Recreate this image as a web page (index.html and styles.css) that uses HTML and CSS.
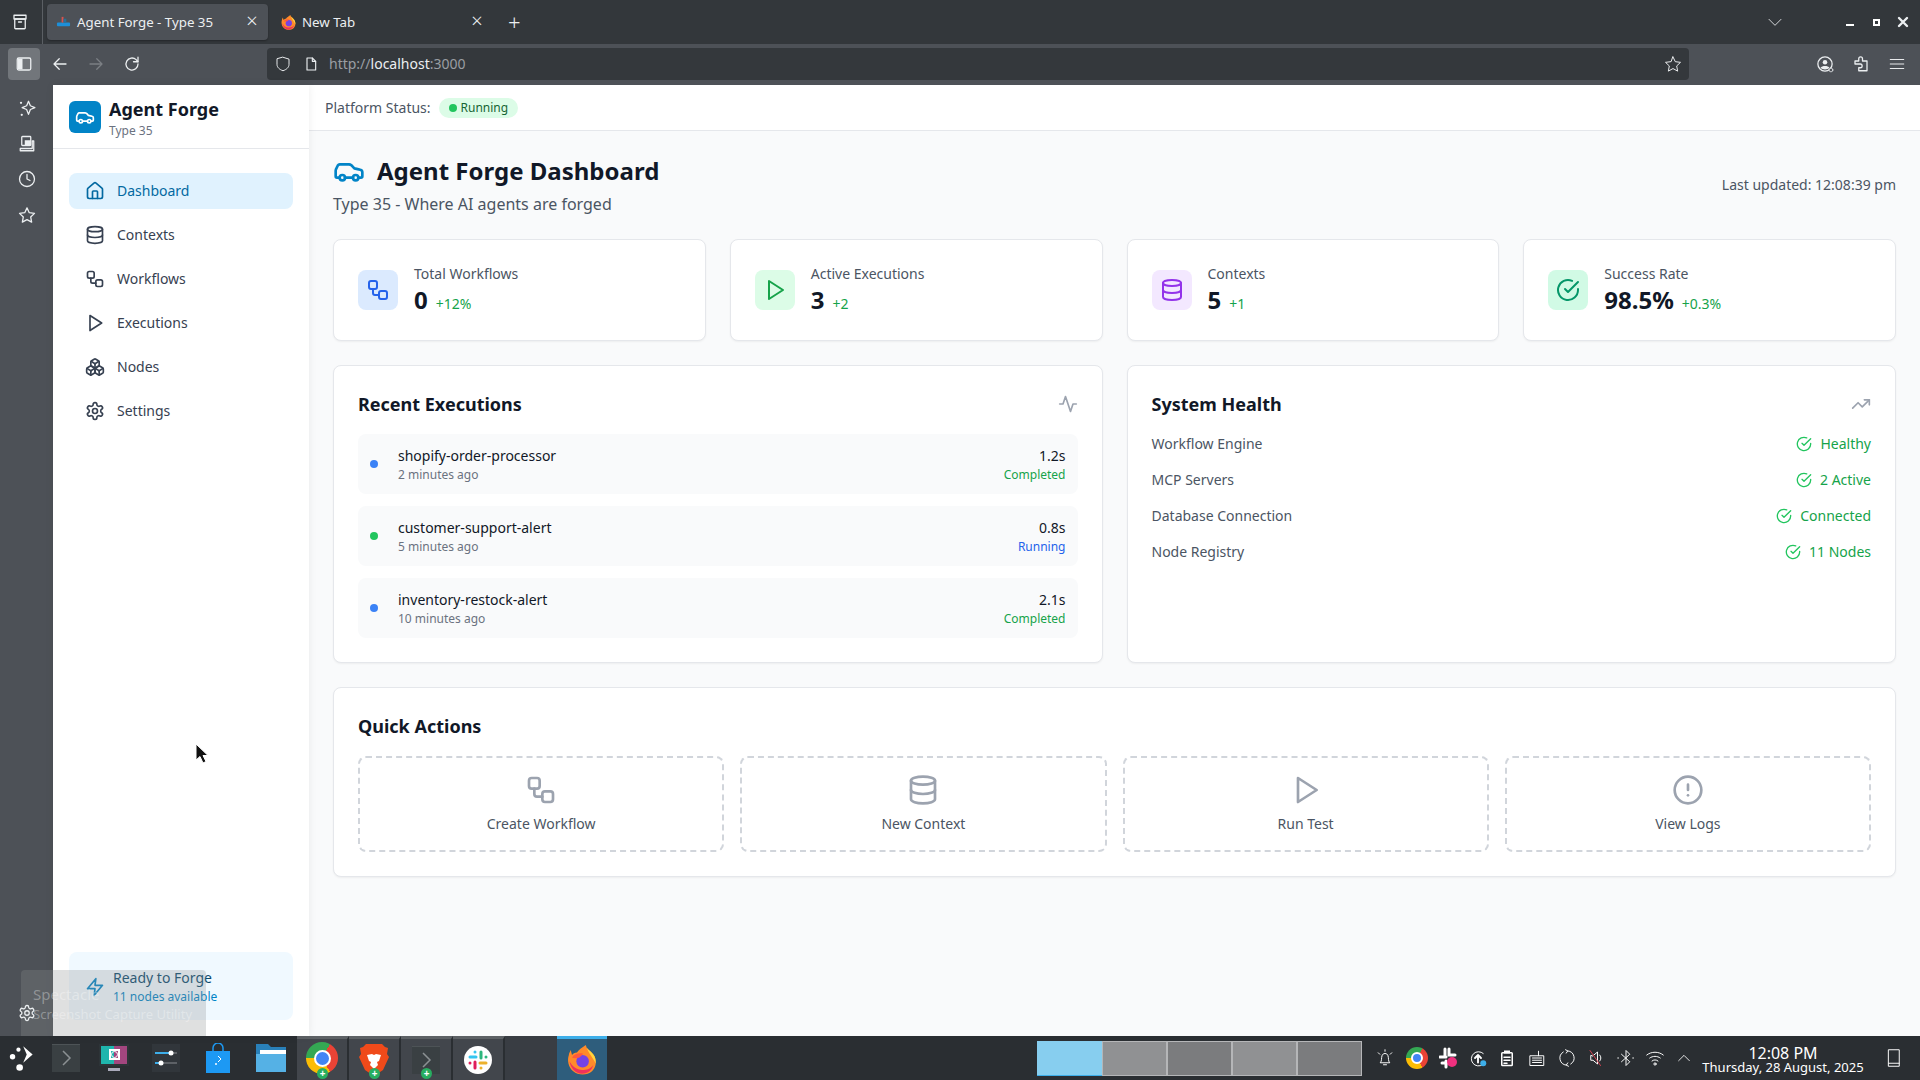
FILE: index.html
```html
<!DOCTYPE html>
<html lang="en">
<head>
<meta charset="utf-8">
<title>Agent Forge - Type 35</title>
<link rel="stylesheet" href="styles.css">
</head>
<body>
<svg class="sprite" width="0" height="0" aria-hidden="true">
  <symbol id="i-car" viewBox="0 0 24 24"><path d="M19 17h2c.6 0 1-.4 1-1v-3c0-.9-.7-1.7-1.5-1.9C18.7 10.6 16 10 16 10s-1.3-1.4-2.2-2.3c-.5-.4-1.1-.7-1.8-.7H5c-.6 0-1.1.4-1.4.9l-1.4 2.9A3.7 3.7 0 0 0 2 12v4c0 .6.4 1 1 1h2"/><circle cx="7" cy="17" r="2"/><path d="M9 17h6"/><circle cx="17" cy="17" r="2"/></symbol>
  <symbol id="i-home" viewBox="0 0 24 24"><path d="M15 21v-8a1 1 0 0 0-1-1h-4a1 1 0 0 0-1 1v8"/><path d="M3 10a2 2 0 0 1 .709-1.528l7-5.999a2 2 0 0 1 2.582 0l7 5.999A2 2 0 0 1 21 10v9a2 2 0 0 1-2 2H5a2 2 0 0 1-2-2z"/></symbol>
  <symbol id="i-db" viewBox="0 0 24 24"><ellipse cx="12" cy="5" rx="9" ry="3"/><path d="M3 5V19A9 3 0 0 0 21 19V5"/><path d="M3 12A9 3 0 0 0 21 12"/></symbol>
  <symbol id="i-flow" viewBox="0 0 24 24"><rect x="3" y="3" width="8" height="8" rx="2"/><path d="M7 11v4a2 2 0 0 0 2 2h4"/><rect x="13" y="13" width="8" height="8" rx="2"/></symbol>
  <symbol id="i-play" viewBox="0 0 24 24"><polygon points="6 3 20 12 6 21 6 3"/></symbol>
  <symbol id="i-boxes" viewBox="0 0 24 24"><path d="M2.97 12.92A2 2 0 0 0 2 14.63v3.24a2 2 0 0 0 .97 1.71l3 1.8a2 2 0 0 0 2.06 0L12 19v-5.5l-5-3-4.03 2.42Z"/><path d="m7 16.5-4.74-2.85"/><path d="m7 16.5 5-3"/><path d="M7 16.5v5.17"/><path d="M12 13.5V19l3.97 2.38a2 2 0 0 0 2.06 0l3-1.8a2 2 0 0 0 .97-1.71v-3.24a2 2 0 0 0-.97-1.71L17 10.5l-5 3Z"/><path d="m17 16.5-5-3"/><path d="m17 16.5 4.74-2.85"/><path d="M17 16.5v5.17"/><path d="M7.97 4.42A2 2 0 0 0 7 6.13v4.37l5 3 5-3V6.13a2 2 0 0 0-.97-1.71l-3-1.8a2 2 0 0 0-2.06 0l-3 1.8Z"/><path d="M12 8 7.26 5.15"/><path d="m12 8 4.74-2.85"/><path d="M12 13.5V8"/></symbol>
  <symbol id="i-gear" viewBox="0 0 24 24"><path d="M12.22 2h-.44a2 2 0 0 0-2 2v.18a2 2 0 0 1-1 1.73l-.43.25a2 2 0 0 1-2 0l-.15-.08a2 2 0 0 0-2.73.73l-.22.38a2 2 0 0 0 .73 2.73l.15.1a2 2 0 0 1 1 1.72v.51a2 2 0 0 1-1 1.74l-.15.09a2 2 0 0 0-.73 2.73l.22.38a2 2 0 0 0 2.73.73l.15-.08a2 2 0 0 1 2 0l.43.25a2 2 0 0 1 1 1.73V20a2 2 0 0 0 2 2h.44a2 2 0 0 0 2-2v-.18a2 2 0 0 1 1-1.73l.43-.25a2 2 0 0 1 2 0l.15.08a2 2 0 0 0 2.73-.73l.22-.39a2 2 0 0 0-.73-2.73l-.15-.08a2 2 0 0 1-1-1.74v-.5a2 2 0 0 1 1-1.74l.15-.09a2 2 0 0 0 .73-2.73l-.22-.38a2 2 0 0 0-2.73-.73l-.15.08a2 2 0 0 1-2 0l-.43-.25a2 2 0 0 1-1-1.73V4a2 2 0 0 0-2-2z"/><circle cx="12" cy="12" r="3"/></symbol>
  <symbol id="i-check" viewBox="0 0 24 24"><path d="M22 11.08V12a10 10 0 1 1-5.93-9.14"/><polyline points="22 4 12 14.01 9 11.01"/></symbol>
  <symbol id="i-activity" viewBox="0 0 24 24"><polyline points="22 12 18 12 15 21 9 3 6 12 2 12"/></symbol>
  <symbol id="i-trend" viewBox="0 0 24 24"><polyline points="22 7 13.5 15.5 8.5 10.5 2 17"/><polyline points="16 7 22 7 22 13"/></symbol>
  <symbol id="i-alert" viewBox="0 0 24 24"><circle cx="12" cy="12" r="10"/><line x1="12" y1="8" x2="12" y2="12"/><line x1="12" y1="16" x2="12.01" y2="16"/></symbol>
  <symbol id="i-zap" viewBox="0 0 24 24"><polygon points="13 2 3 14 12 14 11 22 21 10 12 10 13 2"/></symbol>
  <symbol id="i-star" viewBox="0 0 24 24"><polygon points="12 2.5 15 8.9 22 9.8 16.9 14.6 18.2 21.5 12 18.1 5.8 21.5 7.1 14.6 2 9.8 9 8.9"/></symbol>
  <symbol id="i-clock" viewBox="0 0 24 24"><circle cx="12" cy="12" r="10"/><polyline points="12 6 12 12 16 14"/></symbol>
  <symbol id="i-firefox" viewBox="0 0 24 24"><path style="fill:#ff8a2a;stroke:none" d="M15 0c0 3 5 5 7 9 2 5 1 9-2 12-4 3.500-11 3.500-15 0C1 18 0 12 1.500 8c0-1 .5-2 1.500-4l1 4c1-1 2-2 4-2 1-2 4-4 7-6z"/><path style="fill:#ffd43d;stroke:none" d="M15 0c0 3 5 5 7 9 1 2 1 4 1 6-2-5-6-8-8-15z"/><path style="fill:#f0315c;stroke:none" d="M2 13c1 6 5 10 10 10 5 0 8-3 9-7-2 3-5 4-9 4-4 0-8-3-10-7z"/><circle style="fill:#7542e5;stroke:none" cx="12.500" cy="13" r="5"/><path style="fill:#ff5a3c;stroke:none" d="M4 10c2-3 6-4 9-3l-3 3c-2 .5-4 1-6 0z"/></symbol>
  <symbol id="i-terminal" viewBox="0 0 28 28"><rect style="fill:#3a4043;stroke:none" x="0" y="0" width="28" height="28"/><rect style="fill:#4d5356;stroke:none" x="0" y="0" width="28" height="1"/><polyline style="stroke:#8b9093;stroke-width:1.500;fill:none" points="11 7 18 14 11 21"/></symbol>
</svg>

<header class="tabbar">
  <div class="tab-group"><svg class="ic ic18 light" viewBox="0 0 24 24"><path d="M5 8h14v12a1 1 0 0 1-1 1H6a1 1 0 0 1-1-1z"/><path d="M4 3h16v5H4z"/><path d="M10 12h4"/></svg></div>
  <div class="tab tab-active">
    <svg class="fav" viewBox="0 0 16 16"><rect x="1" y="8" width="14" height="4" rx="1" fill="#1d8fd8"/><rect x="6" y="2" width="2" height="6" fill="#d9534f"/><rect x="8" y="4" width="3" height="4" fill="#2a6f97"/></svg>
    <span class="tab-title">Agent Forge - Type 35</span>
    <span class="tab-x">×</span>
  </div>
  <div class="tab">
    <svg class="fav"><use href="#i-firefox"/></svg>
    <span class="tab-title">New Tab</span>
    <span class="tab-x">×</span>
  </div>
  <span class="tab-plus">+</span>
  <div class="win">
    <svg class="ic ic16 light thin chev" viewBox="0 0 24 24"><polyline points="3 8 12 17 21 8"/></svg>
    <span class="win-min"></span><span class="win-max"></span>
    <svg class="ic ic12 light heavy" viewBox="0 0 12 12"><path d="M2 2l8 8M10 2l-8 8"/></svg>
  </div>
</header>

<nav class="toolbar">
  <button class="tb-side"><svg class="ic ic18 light" viewBox="0 0 24 24"><rect x="3" y="4" width="18" height="16" rx="2"/><rect class="solid" x="4" y="5" width="6" height="14"/></svg></button>
  <svg class="ic ic18 light tb-b" viewBox="0 0 24 24"><path d="M20 12H5M11 5l-7 7 7 7"/></svg>
  <svg class="ic ic18 dim tb-f" viewBox="0 0 24 24"><path d="M4 12h15M13 5l7 7-7 7"/></svg>
  <svg class="ic ic18 light tb-r" viewBox="0 0 24 24"><path d="M20 12a8 8 0 1 1-2.500-5.800L20 9"/><path d="M20 3v6h-6"/></svg>
  <div class="urlbar">
    <svg class="ic ic18 light thin" viewBox="0 0 24 24"><path d="M12 3l8 2.500v7c0 4-3.500 7-8 8.500-4.500-1.500-8-4.500-8-8.500v-7z"/></svg>
    <svg class="ic ic16 light url-doc" viewBox="0 0 24 24"><path d="M6 3h8l5 5v13H6z"/><path d="M14 3v5h5"/></svg>
    <span class="url"><span class="url-dim">http://</span>localhost<span class="url-dim">:3000</span></span>
    <svg class="ic ic18 light thin url-star"><use href="#i-star"/></svg>
  </div>
  <div class="tb-right">
    <svg class="ic ic18 light" viewBox="0 0 24 24"><circle cx="12" cy="12" r="9.500"/><circle cx="12" cy="9.500" r="3" class="solid"/><path class="solid" d="M6 17c2-3 10-3 12 0-3 3-9 3-12 0z"/><circle cx="20" cy="20" r="2.500" class="dark"/></svg>
    <svg class="ic ic18 light" viewBox="0 0 24 24"><path d="M4 8h5V5a2.500 2.500 0 0 1 5 0v3h6v13H9v-4h2a2.500 2.500 0 0 0 0-5H4z"/></svg>
    <svg class="ic ic18 light thin" viewBox="0 0 24 24"><path d="M3 6h18M3 12h18M3 18h18"/></svg>
  </div>
</nav>

<div class="window">
  <aside class="browser-rail">
    <div class="rail-top">
      <svg class="ic ic18 light" viewBox="0 0 24 24"><path d="M14 3l2.500 6 6 2.500-6 2.500-2.500 6.500-2.500-6.500-6-2.500 6-2.500z"/><circle class="solid" cx="4" cy="5" r="1.500"/><circle class="solid" cx="5" cy="21" r="1.500"/></svg>
      <svg class="ic ic18 light" viewBox="0 0 24 24"><rect x="5" y="2" width="12" height="12" rx="1"/><path class="solid" d="M9 7h8v7H9z"/><path d="M19 8h2v13H3v-3h16z"/></svg>
      <svg class="ic ic18 light"><use href="#i-clock"/></svg>
      <svg class="ic ic18 light"><use href="#i-star"/></svg>
    </div>
  </aside>

  <aside class="sidebar">
    <div class="brand">
      <div class="brand-logo"><svg class="ic ic20 white"><use href="#i-car"/></svg></div>
      <div>
        <div class="brand-name">Agent Forge</div>
        <div class="brand-sub">Type 35</div>
      </div>
    </div>
    <ul class="nav">
      <li class="nav-item nav-active"><svg class="ic ic20"><use href="#i-home"/></svg>Dashboard</li>
      <li class="nav-item"><svg class="ic ic20"><use href="#i-db"/></svg>Contexts</li>
      <li class="nav-item"><svg class="ic ic20"><use href="#i-flow"/></svg>Workflows</li>
      <li class="nav-item"><svg class="ic ic20"><use href="#i-play"/></svg>Executions</li>
      <li class="nav-item"><svg class="ic ic20"><use href="#i-boxes"/></svg>Nodes</li>
      <li class="nav-item"><svg class="ic ic20"><use href="#i-gear"/></svg>Settings</li>
    </ul>
    <div class="ready">
      <svg class="ic ic20 sky"><use href="#i-zap"/></svg>
      <div>
        <div class="ready-title">Ready to Forge</div>
        <div class="ready-sub">11 nodes available</div>
      </div>
    </div>
  </aside>

  <div class="content">
    <div class="status-bar">
      <span class="status-label">Platform Status:</span>
      <span class="pill"><i class="pill-dot"></i>Running</span>
    </div>
    <main class="main">
      <div class="page-head">
        <div>
          <h1 class="page-title"><svg class="ic ic32 sky"><use href="#i-car"/></svg>Agent Forge Dashboard</h1>
          <p class="page-sub">Type 35 - Where AI agents are forged</p>
        </div>
        <div class="updated">Last updated: 12:08:39 pm</div>
      </div>

      <section class="stats">
        <div class="card stat">
          <div class="stat-ic bg-blue"><svg class="ic ic24"><use href="#i-flow"/></svg></div>
          <div><div class="stat-label">Total Workflows</div><div class="stat-val">0<span class="stat-delta">+12%</span></div></div>
        </div>
        <div class="card stat">
          <div class="stat-ic bg-green"><svg class="ic ic24"><use href="#i-play"/></svg></div>
          <div><div class="stat-label">Active Executions</div><div class="stat-val">3<span class="stat-delta">+2</span></div></div>
        </div>
        <div class="card stat">
          <div class="stat-ic bg-purple"><svg class="ic ic24"><use href="#i-db"/></svg></div>
          <div><div class="stat-label">Contexts</div><div class="stat-val">5<span class="stat-delta">+1</span></div></div>
        </div>
        <div class="card stat">
          <div class="stat-ic bg-emerald"><svg class="ic ic24"><use href="#i-check"/></svg></div>
          <div><div class="stat-label">Success Rate</div><div class="stat-val">98.5%<span class="stat-delta">+0.3%</span></div></div>
        </div>
      </section>

      <section class="panels">
        <div class="card panel">
          <div class="panel-head"><h2 class="panel-title">Recent Executions</h2><svg class="ic ic20 gray"><use href="#i-activity"/></svg></div>
          <div class="exec-list">
            <div class="exec"><i class="dot dot-blue"></i><div class="exec-main"><div class="exec-name">shopify-order-processor</div><div class="exec-time">2 minutes ago</div></div><div class="exec-right"><div class="exec-name">1.2s</div><div class="exec-done">Completed</div></div></div>
            <div class="exec"><i class="dot dot-green"></i><div class="exec-main"><div class="exec-name">customer-support-alert</div><div class="exec-time">5 minutes ago</div></div><div class="exec-right"><div class="exec-name">0.8s</div><div class="exec-run">Running</div></div></div>
            <div class="exec"><i class="dot dot-blue"></i><div class="exec-main"><div class="exec-name">inventory-restock-alert</div><div class="exec-time">10 minutes ago</div></div><div class="exec-right"><div class="exec-name">2.1s</div><div class="exec-done">Completed</div></div></div>
          </div>
        </div>
        <div class="card panel">
          <div class="panel-head"><h2 class="panel-title">System Health</h2><svg class="ic ic20 gray"><use href="#i-trend"/></svg></div>
          <div class="health">
            <div class="health-row"><span>Workflow Engine</span><span class="health-ok"><svg class="ic ic16"><use href="#i-check"/></svg>Healthy</span></div>
            <div class="health-row"><span>MCP Servers</span><span class="health-ok"><svg class="ic ic16"><use href="#i-check"/></svg>2 Active</span></div>
            <div class="health-row"><span>Database Connection</span><span class="health-ok"><svg class="ic ic16"><use href="#i-check"/></svg>Connected</span></div>
            <div class="health-row"><span>Node Registry</span><span class="health-ok"><svg class="ic ic16"><use href="#i-check"/></svg>11 Nodes</span></div>
          </div>
        </div>
      </section>

      <section class="card panel">
        <h2 class="panel-title quick-title">Quick Actions</h2>
        <div class="quick">
          <div class="quick-btn"><svg class="ic ic32"><use href="#i-flow"/></svg>Create Workflow</div>
          <div class="quick-btn"><svg class="ic ic32"><use href="#i-db"/></svg>New Context</div>
          <div class="quick-btn"><svg class="ic ic32"><use href="#i-play"/></svg>Run Test</div>
          <div class="quick-btn"><svg class="ic ic32"><use href="#i-alert"/></svg>View Logs</div>
        </div>
      </section>
    </main>
  </div>
</div>

<footer class="taskbar">
  <div class="launcher"><svg width="26" height="26" viewBox="2 2 22 22"><path d="M14 3l8 7-8 7 3-7z" fill="#fff"/><circle cx="5" cy="12" r="2.300" fill="#fff"/><circle cx="10" cy="6" r="1.800" fill="#fff"/><circle cx="11" cy="21" r="2.800" fill="#fff"/></svg></div>
  <div class="task-ic ti44"><svg width="28" height="28"><use href="#i-terminal"/></svg></div>
  <div class="task-ic"><svg width="32" height="32" viewBox="0 0 32 32"><rect x="1" y="2" width="30" height="22" fill="#2d3438"/><rect x="3" y="4" width="13" height="18" fill="#1fb5ad"/><rect x="16" y="4" width="13" height="18" fill="#a3467f"/><rect x="12" y="8" width="9" height="9" fill="none" stroke="#fff" stroke-width="2"/><circle cx="16.500" cy="12.500" r="3" fill="none" stroke="#fff"/><rect x="10" y="26" width="12" height="3" fill="#aab"/></svg></div>
  <div class="task-ic"><svg width="28" height="28" viewBox="0 0 28 28"><rect width="28" height="28" fill="#31363b"/><path d="M3 9h22M3 19h22" stroke="#5d6166" stroke-width="2"/><path d="M3 9h16M3 19h6" stroke="#3daee9" stroke-width="2"/><circle cx="19" cy="9" r="2.500" fill="#fff"/><circle cx="9" cy="19" r="2.500" fill="#fff"/></svg></div>
  <div class="task-ic"><svg width="24" height="30" viewBox="0 0 24 30"><path d="M0 8h24v22H0z" fill="#1d99f3"/><path d="M7 9V5a5 5 0 0 1 10 0v4" fill="none" stroke="#1d99f3" stroke-width="1.500"/><circle cx="10" cy="21" r="1" fill="#fff"/><path d="M12 13l3 3-3 3" fill="none" stroke="#fff"/></svg></div>
  <div class="task-ic ti53"><svg width="30" height="28" viewBox="0 0 30 28"><path d="M0 0h12l3 3h15v25H0z" fill="#2980b9"/><rect x="4" y="6" width="26" height="5" fill="#fff"/><rect y="10" width="30" height="18" fill="#55b1e5"/></svg></div>
  <div class="task-run">
    <div class="chrome"><i></i></div><span class="badge">+</span>
  </div>
  <div class="task-run">
    <svg width="30" height="34" viewBox="0 0 30 34"><path d="M7 1h16l3 3 3 1-1 6 2 3-6 13-9 6-9-6L0 14l2-3-1-6 3-1z" fill="#f04a1a"/><path d="M8 12l5-1 2 1 2-1 5 1-2 6-2 1 1 3-4 4-4-4 1-3-2-1z" fill="#fff"/></svg><span class="badge">+</span>
  </div>
  <div class="task-run">
    <svg width="28" height="28"><use href="#i-terminal"/></svg><span class="badge">+</span>
  </div>
  <div class="task-run">
    <svg width="28" height="28" viewBox="0 0 28 28"><circle cx="14" cy="14" r="14" fill="#fff"/><g fill="none" stroke-width="3" stroke-linecap="round"><path d="M11 6v.1M6 11h6" stroke="#36c5f0"/><path d="M22 11v.1M17 6v6" stroke="#2eb67d"/><path d="M17 22v.1M16 17h6" stroke="#ecb22e"/><path d="M6 17v.1M11 16v6" stroke="#e01e5a"/></g></svg>
  </div>
  <div class="task-blank"></div>
  <div class="task-fox"><svg width="30" height="32"><use href="#i-firefox"/></svg></div>

  <div class="pager">
    <div class="desk desk-on"></div><div class="desk desk-a"></div><div class="desk desk-b"></div><div class="desk desk-a"></div><div class="desk desk-b"></div>
  </div>
  <div class="tray">
    <svg class="ic ic18 white thin" viewBox="0 0 24 24"><path d="M6 18c2-2 1-6 2-9 1-4 7-4 8 0 1 3 0 7 2 9z"/><path d="M10 21h4M12 1v2M3 5l2 2M21 5l-2 2"/></svg>
    <div class="chrome small"><i></i></div>
    <svg width="18" height="22" viewBox="0 0 18 22"><path d="M6 2v7M1 10h6M10 2v6h6" stroke="#fff" stroke-width="3" stroke-linecap="round" fill="none"/><path d="M3 16h5M7 14v6" stroke="#fff" stroke-width="3" stroke-linecap="round"/><circle cx="13" cy="15" r="5" fill="#f0307f"/></svg>
    <svg class="ic ic18 white thin" viewBox="0 0 24 24"><path d="M19 6a9.500 9.500 0 1 0-1 15"/><path d="M12 18V8M8 12l4-4 4 4" stroke-width="2.500"/><circle class="blue-fill" cx="19" cy="19" r="4"/></svg>
    <svg class="ic ic18 white" viewBox="0 0 24 24"><rect x="5" y="5" width="14" height="17" rx="1"/><rect class="solid" x="8" y="2" width="8" height="4"/><path d="M8 11h8M8 15h8M8 19h4"/></svg>
    <svg class="ic ic18 white thin" viewBox="0 0 24 24"><rect x="3" y="9" width="18" height="13"/><path d="M6 12h12M6 15h12M6 18h12M14 9V3"/></svg>
    <svg class="ic ic18 white thin" viewBox="0 0 24 24"><path d="M7 4a9.500 9.500 0 0 0 4 17.500M17 20A9.500 9.500 0 0 0 13 2.500"/><path d="M10 1l3 1.500-2 3M14 23l-3-1.500 2-3"/></svg>
    <svg class="ic ic18 white thin" viewBox="0 0 24 24"><path d="M5 9v6h3l6 5V4L8 9z"/><path d="M17 8c2 2 2 6 0 8"/><path class="red-line" d="M4 2l14 20"/></svg>
    <svg class="ic ic18 white thin" viewBox="0 0 24 24"><path d="M6 7l11 10-5 5V2l5 5L6 17"/><path d="M1 12h2M21 12h2" stroke-dasharray="1 1"/></svg>
    <svg class="ic ic18 white thin" viewBox="0 0 24 24"><path d="M1 8c6-5 16-5 22 0M5 12c4-3 10-3 14 0M8 16c2-2 6-2 8 0"/><circle cx="12" cy="20" r="1.500"/></svg>
    <svg class="ic ic16 white thin" viewBox="0 0 24 24"><polyline points="4 16 12 8 20 16"/></svg>
  </div>
  <div class="clock"><div class="clock-t">12:08 PM</div><div class="clock-d">Thursday, 28 August, 2025</div></div>
  <svg class="ic ic18 white thin desk-show" viewBox="0 0 24 24"><rect x="5" y="1" width="14" height="22"/><path d="M5 19h14"/></svg>
</footer>

<div class="notify"><div class="notify-a">Spectacle</div><div class="notify-b">Screenshot Capture Utility</div></div>
<svg class="rail-gear ic ic18 light"><use href="#i-gear"/></svg>
<svg class="cursor" width="16" height="22" viewBox="0 0 16 22"><path d="M2 1v16l4-3.500 3 6.500 3-1.500-3-6h5z" fill="#111" stroke="#fff" stroke-width="1"/></svg>
</body>
</html>
```

FILE: styles.css
```css
* { box-sizing: border-box; }
html, body { margin: 0; height: 100%; overflow: hidden; }
body {
  display: flex; flex-direction: column; height: 100vh;
  font-family: "Noto Sans", sans-serif; color: #111827; background: #f9fafb;
}
h1, h2, p, ul { margin: 0; padding: 0; }
ul { list-style: none; }
.sprite { display: block; }

.ic { display: block; flex: none; fill: none; stroke: currentColor; stroke-width: 2; stroke-linecap: round; stroke-linejoin: round; }
.ic12 { width: 12px; height: 12px; }
.ic16 { width: 16px; height: 16px; }
.ic18 { width: 18px; height: 18px; }
.ic20 { width: 20px; height: 20px; }
.ic24 { width: 24px; height: 24px; }
.ic32 { width: 32px; height: 32px; }
.light { color: #eceff1; stroke-width: 1.7; }
.dim { color: #7b7f84; stroke-width: 1.7; }
.thin { stroke-width: 1.3; }
.heavy { stroke-width: 2.4; }
.white { color: #fff; }
.sky { color: #0284c7; }
.gray { color: #9ca3af; }
.solid { fill: currentColor; stroke: none; }
.dark { fill: #4d5157; stroke-width: 1; }
.blue-fill { fill: #3daee9; stroke: none; }
.red-line { stroke: #da4453; }

/* browser chrome */
.tabbar { flex: none; height: 44px; background: #33373b; display: flex; align-items: center; color: #eceff1; font-size: 13.3px; }
.tab-group { width: 43px; height: 44px; display: flex; align-items: center; justify-content: center; border-right: 1px solid #5b5f64; margin-right: 4px; padding-right: 2px; }
.tab { width: 221px; height: 36px; display: flex; align-items: center; padding: 0 8px 0 9px; border-radius: 4px; margin-right: 4px; }
.tab-active { background: #4d5157; box-shadow: 0 1px 2px rgba(0,0,0,.3); }
.fav { width: 15px; height: 15px; flex: none; margin-right: 6px; }
.tab-title { flex: 1; white-space: nowrap; }
.tab-x { font-size: 20px; line-height: 20px; width: 16px; text-align: center; font-weight: 300; margin-top: -2px; }
.tab-plus { font-size: 22px; line-height: 24px; margin-left: 11px; font-weight: 300; }
.win { margin-left: auto; display: flex; align-items: center; }
.chev { margin-right: 63px; }
.win-min { width: 8px; height: 2px; background: #fff; margin-right: 19px; margin-top: 6px; }
.win-max { width: 7px; height: 7px; border: 2px solid #fff; margin-right: 17px; }
.win .heavy { margin-right: 11px; }

.toolbar { flex: none; height: 41px; background: #4d5157; display: flex; align-items: flex-start; padding: 4px 0 0 8px; }
.tb-side { width: 32px; height: 32px; border: 0; padding: 0; border-radius: 4px; background: #72767b; display: flex; align-items: center; justify-content: center; margin-right: 11px; }
.tb-b, .tb-f, .tb-r { margin-top: 7px; margin-right: 18px; }
.tb-r { margin-right: 126px; }
.urlbar { width: 1422px; height: 32px; background: #34383c; border-radius: 4px; display: flex; align-items: center; padding: 0 7px; color: #fff; }
.url-doc { margin-left: 11px; margin-right: 10px; }
.url { flex: 1; color: #eceff1; font-size: 14px; line-height: 20px; }
.url-dim { color: #9a9ea3; }
.tb-right { display: flex; gap: 18px; margin: 7px 0 0 127px; }

/* window */
.window { flex: 1; min-height: 0; display: flex; }
.browser-rail { width: 53px; flex: none; background: #4d5157; display: flex; flex-direction: column; align-items: center; padding: 14px 0; }
.rail-top { display: flex; flex-direction: column; gap: 17.7px; }
.sidebar { width: 256px; flex: none; background: #fff; display: flex; flex-direction: column; box-shadow: 0 0 8px rgba(0,0,0,.07); position: relative; z-index: 1; }
.brand { height: 64px; flex: none; display: flex; align-items: center; gap: 8px; padding: 0 16px; border-bottom: 1px solid #e5e7eb; }
.brand-logo { width: 32px; height: 32px; background: #0284c7; border-radius: 6px; display: flex; align-items: center; justify-content: center; }
.brand-name { font-size: 18px; line-height: 28px; font-weight: 700; color: #111827; }
.brand-sub { font-size: 12px; line-height: 16px; color: #6b7280; }
.nav { flex: 1; display: flex; flex-direction: column; gap: 8px; padding: 24px 16px 0; }
.nav-item { height: 36px; display: flex; align-items: center; gap: 12px; padding: 0 16px; border-radius: 8px; font-size: 14px; line-height: 20px; color: #374151; }
.nav-active { background: #e0f2fe; color: #0369a1; }
.ready { height: 68px; margin: 0 16px 16px; padding: 16px 16px 14px; background: #f0f9ff; border-radius: 8px; display: flex; align-items: center; gap: 8px; }
.ready-title { font-size: 14px; line-height: 20px; color: #0c4a6e; }
.ready-sub { font-size: 12px; line-height: 18px; color: #0284c7; }

.content { flex: 1; min-width: 0; display: flex; flex-direction: column; }
.status-bar { height: 46px; flex: none; background: #fff; border-bottom: 1px solid #e5e7eb; display: flex; align-items: center; padding: 0 16px; gap: 8px; }
.status-label { font-size: 14px; line-height: 20px; color: #4b5563; }
.pill { display: inline-flex; align-items: center; gap: 4px; height: 20px; padding: 0 10px; border-radius: 10px; background: #dcfce7; color: #166534; font-size: 12px; line-height: 16px; }
.pill-dot { width: 8px; height: 8px; border-radius: 50%; background: #22c55e; }

.main { flex: 1; padding: 24px; display: flex; flex-direction: column; gap: 24px; background: #f9fafb; }
.page-head { display: flex; align-items: center; justify-content: space-between; }
.page-title { display: flex; align-items: center; gap: 12px; font-size: 24px; line-height: 32px; font-weight: 700; color: #111827; }
.page-sub { margin-top: 6px; font-size: 16px; line-height: 22px; color: #4b5563; }
.updated { font-size: 14px; line-height: 20px; color: #4b5563; }

.card { background: #fff; border: 1px solid #e5e7eb; border-radius: 8px; box-shadow: 0 1px 2px rgba(0,0,0,.05); }
.stats { display: grid; grid-template-columns: repeat(4, 1fr); gap: 24px; }
.stat { padding: 24px; display: flex; align-items: center; gap: 16px; }
.stat-ic { width: 40px; height: 40px; border-radius: 8px; display: flex; align-items: center; justify-content: center; }
.bg-blue { background: #dbeafe; color: #2563eb; }
.bg-green { background: #dcfce7; color: #16a34a; }
.bg-purple { background: #f3e8ff; color: #9333ea; }
.bg-emerald { background: #d1fae5; color: #059669; }
.stat-label { font-size: 14px; line-height: 20px; color: #4b5563; }
.stat-val { font-size: 24px; line-height: 32px; font-weight: 700; color: #111827; }
.stat-delta { margin-left: 8px; font-size: 14px; line-height: 14px; font-weight: 400; color: #16a34a; }

.panels { display: grid; grid-template-columns: 1fr 1fr; gap: 24px; }
.panel { padding: 24px; }
.panel-head { display: flex; align-items: center; justify-content: space-between; margin-bottom: 16px; }
.panel-title { font-size: 18px; line-height: 28px; font-weight: 700; color: #111827; }
.exec-list { display: flex; flex-direction: column; gap: 12px; }
.exec { height: 60px; padding: 12px; background: #f9fafb; border-radius: 8px; display: flex; align-items: flex-start; }
.dot { width: 8px; height: 8px; border-radius: 50%; margin-right: 20px; flex: none; align-self: center; }
.dot-blue { background: #3b82f6; }
.dot-green { background: #22c55e; }
.exec-main { flex: 1; }
.exec-name { font-size: 14px; line-height: 20px; color: #111827; }
.exec-time { font-size: 12px; line-height: 18px; color: #6b7280; }
.exec-right { text-align: right; }
.exec-done { font-size: 12px; line-height: 18px; color: #16a34a; }
.exec-run { font-size: 12px; line-height: 18px; color: #2563eb; }
.health { display: flex; flex-direction: column; gap: 16px; }
.health-row { display: flex; justify-content: space-between; font-size: 14px; line-height: 20px; color: #4b5563; }
.health-ok { display: flex; align-items: center; gap: 8px; color: #16a34a; }
.health-ok .ic { color: #22c55e; }

.quick-title { margin-bottom: 16px; }
.quick { display: grid; grid-template-columns: repeat(4, 1fr); gap: 16px; }
.quick-btn { height: 96px; padding: 16px; border: 2px dashed #d1d5db; border-radius: 8px; display: flex; flex-direction: column; align-items: center; gap: 8px; font-size: 14px; line-height: 20px; color: #4b5563; }
.quick-btn .ic { color: #9ca3af; }

/* taskbar */
.taskbar { flex: none; height: 44px; background: #2a2e32; display: flex; align-items: center; color: #fff; }
.launcher { width: 44px; display: flex; justify-content: center; }
.task-ic { width: 52px; display: flex; justify-content: center; }
.ti44 { width: 44px; }
.ti53 { width: 53px; }
.task-run { width: 52px; height: 44px; background: #42464c; border-top: 3px solid #5d6165; border-right: 2px solid #2a2e32; display: flex; align-items: center; justify-content: center; position: relative; }
.badge { position: absolute; left: 20px; bottom: 1px; width: 11px; height: 11px; border-radius: 50%; background: #27ae60; color: #fff; font-size: 10px; line-height: 10px; text-align: center; font-weight: 700; }
.task-blank { width: 52px; height: 44px; background: #393d43; }
.task-fox { width: 50px; height: 44px; background: #2e5d7c; border-top: 3px solid #3daee9; display: flex; align-items: center; justify-content: center; }
.chrome { width: 32px; height: 32px; border-radius: 50%; background: conic-gradient(from 30deg, #ea4335 0 120deg, #fbbc04 120deg 240deg, #34a853 240deg 360deg); display: flex; align-items: center; justify-content: center; margin-top: -3px; }
.chrome i { width: 17px; height: 17px; border-radius: 50%; background: #4285f4; border: 2px solid #fff; display: block; }
.chrome.small { width: 22px; height: 22px; margin-top: 0; }
.chrome.small i { width: 12px; height: 12px; }
.pager { margin-left: auto; display: flex; }
.desk { width: 65px; height: 35px; border: 1px solid #b5b6b8; }
.desk-on { background: #87ceef; border: 0; border-bottom: 1px solid #3daee9; }
.desk-a { background: #909193; }
.desk-b { background: #7b7c7e; }
.tray { display: flex; align-items: center; justify-content: space-between; width: 316px; margin-left: 14px; }
.clock { width: 172px; text-align: center; margin-left: 5px; padding-top: 3px; }
.clock-t { font-size: 16px; line-height: 14px; }
.clock-d { font-size: 13px; line-height: 14px; }
.desk-show { margin: 0 17px 0 16px; }

/* overlays */
.notify { position: absolute; left: 21px; top: 970px; width: 185px; height: 66px; padding: 14px 12px; background: rgba(140,142,145,.28); border-radius: 4px 4px 0 0; color: rgba(255,255,255,.32); font-size: 15px; line-height: 20px; z-index: 2; }
.notify-b { font-size: 13px; }
.rail-gear { position: absolute; left: 18px; top: 1004px; z-index: 3; }
.cursor { position: absolute; left: 194px; top: 743px; z-index: 4; }
```
